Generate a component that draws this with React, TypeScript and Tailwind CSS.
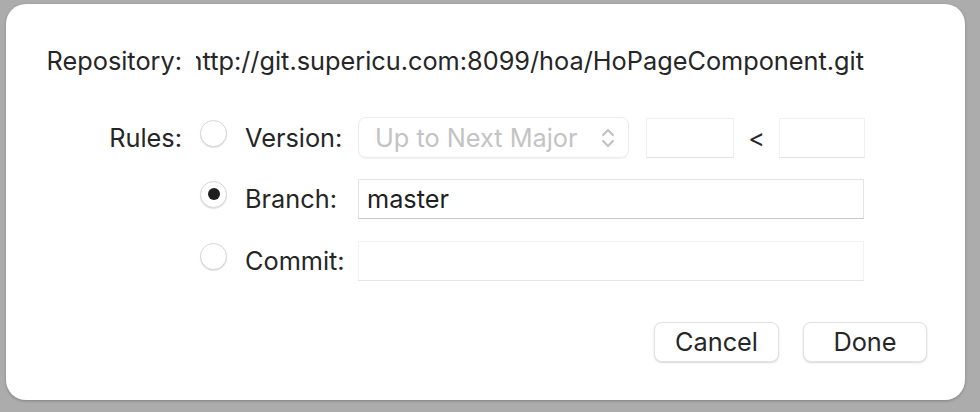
function Radio({ checked }: { checked?: boolean }) {
  return (
    <div className="w-[27px] h-[27px] mb-[9px] rounded-full bg-white border border-[#d6d6d6] shadow-[0_1px_1px_rgba(0,0,0,0.12)] flex items-center justify-center shrink-0">
      {checked && <div className="w-[12px] h-[12px] rounded-full bg-[#1f1f1f]" />}
    </div>
  );
}

export default function App() {
  return (
    <div
      className="w-[980px] h-[412px] bg-[#acacac] pl-[6px] pt-[4px] overflow-hidden"
      style={{ fontFamily: 'Inter, "Liberation Sans", sans-serif' }}
    >
      <div className="w-[959px] h-[396px] bg-white rounded-[20px] shadow-[0_1px_3px_rgba(0,0,0,0.25)] flex flex-col text-[25.3px] text-[#262626]">
        {/* Repository row */}
        <div className="flex items-center h-[40px] mt-[37px]">
          <div className="w-[176px] text-right">Repository:</div>
          <div className="w-[668px] ml-[14px] overflow-hidden flex justify-end whitespace-nowrap">
            <span>http://git.supericu.com:8099/hoa/HoPageComponent.git</span>
          </div>
        </div>

        {/* Version row */}
        <div className="flex items-center h-[41px] mt-[36px]">
          <div className="w-[176px] text-right">Rules:</div>
          <div className="ml-[18px]"><Radio /></div>
          <div className="w-[113px] ml-[18px] whitespace-nowrap">Version:</div>
          <div className="w-[271px] h-[41px] rounded-[8px] border border-[#ececec] shadow-[0_1px_1px_rgba(0,0,0,0.06)] flex items-center justify-between pl-[16px] pr-[13px] text-[#c3c3c3] whitespace-nowrap">
            <span>Up to Next Major</span>
            <svg width="14" height="24" viewBox="0 0 14 24" fill="none" stroke="#bfbfbf" strokeWidth="2" strokeLinecap="round" strokeLinejoin="round">
              <polyline points="2,9 7,4 12,9" />
              <polyline points="2,15 7,20 12,15" />
            </svg>
          </div>
          <div className="w-[88px] h-[40px] ml-[17px] border border-[#f0f0f0] border-b-[#e2e2e2]" />
          <div className="w-[45px] text-center text-[#262626]">&lt;</div>
          <div className="w-[86px] h-[40px] border border-[#f0f0f0] border-b-[#e2e2e2]" />
        </div>

        {/* Branch row */}
        <div className="flex items-center h-[41px] mt-[20px]">
          <div className="w-[176px]" />
          <div className="ml-[18px]"><Radio checked /></div>
          <div className="w-[113px] ml-[18px] whitespace-nowrap">Branch:</div>
          <div className="w-[506px] h-[40px] border border-[#e4e4e4] border-b-[#c8c8c8] flex items-center pl-[8px] text-[#1f1f1f]">
            master
          </div>
        </div>

        {/* Commit row */}
        <div className="flex items-center h-[40px] mt-[22px]">
          <div className="w-[176px]" />
          <div className="ml-[18px]"><Radio /></div>
          <div className="w-[113px] ml-[18px] whitespace-nowrap">Commit:</div>
          <div className="w-[506px] h-[40px] border border-[#f2f2f2] border-b-[#e4e4e4]" />
        </div>

        {/* Buttons */}
        <div className="flex justify-end gap-[24px] mt-[41px] pr-[38px]">
          <button className="w-[125px] h-[40px] rounded-[8px] bg-white border border-[#e2e2e2] shadow-[0_1px_2px_rgba(0,0,0,0.15)] text-[25.3px] text-[#262626]">
            Cancel
          </button>
          <button className="w-[124px] h-[40px] rounded-[8px] bg-white border border-[#e2e2e2] shadow-[0_1px_2px_rgba(0,0,0,0.15)] text-[25.3px] text-[#262626]">
            Done
          </button>
        </div>
      </div>
    </div>
  );
}
